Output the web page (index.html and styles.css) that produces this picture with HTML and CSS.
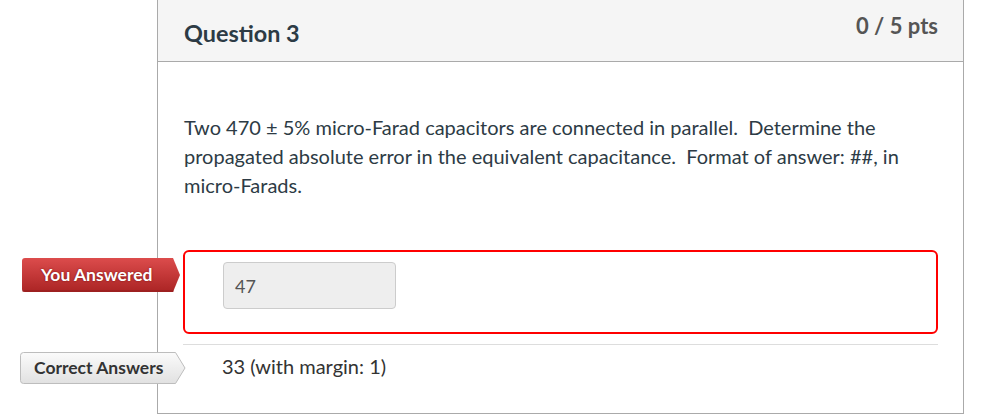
FILE: index.html
```html
<!DOCTYPE html>
<html lang="en">
<head>
<meta charset="utf-8">
<title>Question 3</title>
<link rel="stylesheet" href="styles.css">
</head>
<body>
<div class="quiz">
  <div class="question">
    <div class="q-header">
      <span class="q-title">Question 3</span>
      <span class="q-points">0 / 5 pts</span>
    </div>
    <div class="q-body">
      <div class="q-text">Two 470 ± 5% micro-Farad capacitors are connected in parallel.&nbsp; Determine the propagated absolute error in the equivalent capacitance.&nbsp; Format of answer: ##, in micro-Farads.</div>
      <div class="answer answer-wrong">
        <div class="tag tag-wrong">
          <svg class="tag-shape" viewBox="0 0 158 34" width="158" height="34" aria-hidden="true">
            <defs>
              <linearGradient id="gRed" x1="0" y1="0" x2="0" y2="1">
                <stop offset="0" stop-color="#dc4c4c"/>
                <stop offset="1" stop-color="#ab2424"/>
              </linearGradient>
            </defs>
            <path d="M3 0 H151 L158 17 L151 34 H3 Q0 34 0 31 V3 Q0 0 3 0 Z" fill="url(#gRed)"/>
            <path d="M0.5 33 H151.5" stroke="#8e1c1c" stroke-width="1"/>
          </svg>
          <span class="tag-label">You Answered</span>
        </div>
        <div class="answer-box">
          <div class="answer-input">47</div>
        </div>
      </div>
      <div class="divider"></div>
      <div class="answer answer-correct">
        <div class="tag tag-correct">
          <svg class="tag-shape" viewBox="0 0 166 32" width="166" height="32" aria-hidden="true">
            <defs>
              <linearGradient id="gGray" x1="0" y1="0" x2="0" y2="1">
                <stop offset="0" stop-color="#fbfbfb"/>
                <stop offset="1" stop-color="#e1e1e1"/>
              </linearGradient>
            </defs>
            <path d="M3.5 0.5 H155.5 L165 16 L155.5 31.5 H3.5 Q0.5 31.5 0.5 28.5 V3.5 Q0.5 0.5 3.5 0.5 Z" fill="url(#gGray)" stroke="#bdbdbd" stroke-width="1"/>
          </svg>
          <span class="tag-label">Correct Answers</span>
        </div>
        <span class="answer-text">33 (with margin: 1)</span>
      </div>
    </div>
  </div>
</div>
</body>
</html>
```

FILE: styles.css
```css
html, body {
  margin: 0;
  padding: 0;
  background: #ffffff;
}

body {
  font-family: Lato, "Open Sans", "Liberation Sans", sans-serif;
  color: #2d3b45;
}

.quiz {
  padding-left: 157px;
  width: 807px;
}

.question {
  border: 1px solid #aaaaaa;
  border-top: none;
}

.q-header {
  height: 62px;
  box-sizing: border-box;
  background: #f5f5f5;
  border-bottom: 1px solid #aaaaaa;
  display: flex;
  justify-content: space-between;
  align-items: flex-start;
  padding: 0 25px 0 26px;
}

.q-title {
  font-size: 23.4px;
  font-weight: 700;
  line-height: 26px;
  margin-top: 20px;
  color: #2d3b45;
}

.q-points {
  font-size: 22px;
  font-weight: 700;
  line-height: 26px;
  margin-top: 13px;
  color: #555555;
}

.q-body {
  padding: 51px 25px 32px 25px;
}

.q-text {
  font-size: 20px;
  line-height: 29px;
  padding-left: 1px;
}

.answer {
  position: relative;
}

.answer-wrong {
  margin-top: 50px;
}

.answer-box {
  border: 2px solid #ff0000;
  border-radius: 6px;
  padding: 10px 38px 23px 38px;
}

.answer-input {
  width: 173px;
  height: 47px;
  box-sizing: border-box;
  background: #eeeeee;
  border: 1px solid #cccccc;
  border-radius: 4px;
  display: flex;
  align-items: center;
  padding-left: 11px;
  font-size: 18px;
  color: #555555;
}

.divider {
  margin-top: 10px;
  height: 1px;
  background: #dddddd;
}

.answer-correct {
  padding: 7px 0 0 39px;
}

.answer-text {
  display: block;
  font-size: 20px;
  line-height: 29px;
  color: #333333;
}

.tag {
  position: absolute;
  display: flex;
  align-items: center;
  box-sizing: border-box;
  font-size: 17.5px;
  font-weight: 700;
}

.tag-shape {
  position: absolute;
  left: 0;
  top: 0;
}

.tag-label {
  position: relative;
  line-height: 20px;
}

.tag-wrong {
  left: -161px;
  top: 8px;
  width: 158px;
  height: 34px;
  padding-left: 19px;
  color: #ffffff;
}

.tag-wrong .tag-label {
  text-shadow: 0 0 2px rgba(90, 0, 0, 0.7);
}

.tag-correct {
  left: -163px;
  top: 7px;
  width: 166px;
  height: 32px;
  padding-left: 14px;
  color: #333333;
}
```
